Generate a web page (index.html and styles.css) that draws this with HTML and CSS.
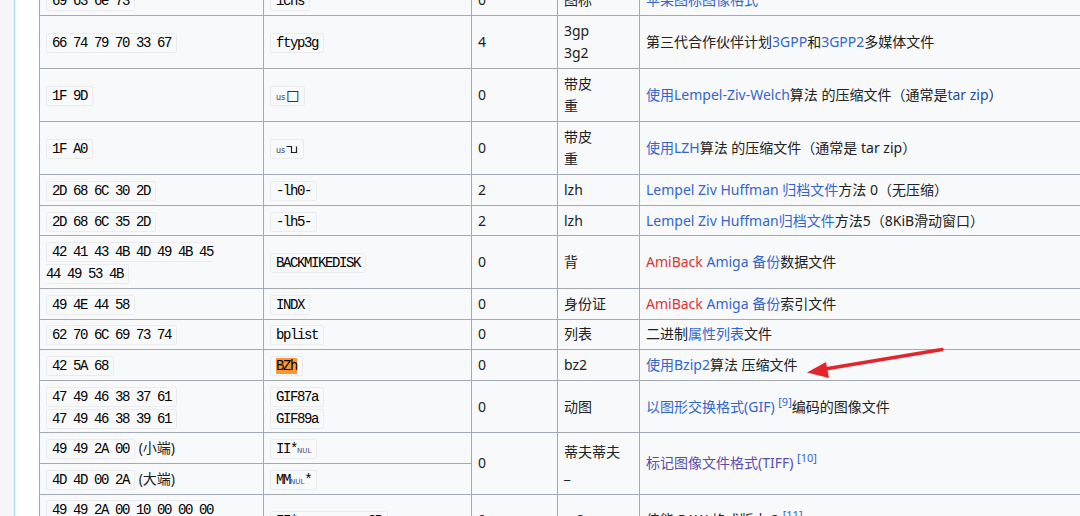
FILE: index.html
```html
<!DOCTYPE html>
<html lang="zh">
<head>
<meta charset="utf-8">
<title>文件签名列表</title>
<link rel="stylesheet" href="styles.css">
</head>
<body>
<div class="rail"></div>
<div class="content">
  <table class="wikitable">
    <colgroup>
      <col class="c1"><col class="c2"><col class="c3"><col class="c4"><col class="c5">
    </colgroup>
    <tbody>
      <tr>
        <td><code>69 63 6e 73</code></td>
        <td><code>icns</code></td>
        <td>0</td>
        <td>图标</td>
        <td><a class="link">苹果图标图像格式</a></td>
      </tr>
      <tr class="tall">
        <td><code>66 74 79 70 33 67</code></td>
        <td><code>ftyp3g</code></td>
        <td>4</td>
        <td>3gp<br>3g2</td>
        <td>第三代合作伙伴计划<a class="link">3GPP</a>和<a class="link">3GPP2</a>多媒体文件</td>
      </tr>
      <tr class="tall">
        <td><code>1F 9D</code></td>
        <td><code><span class="ctl">us</span><span class="tofu">□</span></code></td>
        <td>0</td>
        <td>带皮<br>重</td>
        <td><a class="link">使用Lempel-Ziv-Welch</a>算法 的压缩文件（通常是<a class="link dark">tar zip</a>）</td>
      </tr>
      <tr class="tall">
        <td><code>1F A0</code></td>
        <td><code><span class="ctl">us</span><svg class="nbsp" width="12" height="9" viewBox="0 0 12 9"><path d="M0.5 1.5H5.5V7.5H10.5V1.5" fill="none" stroke="#222" stroke-width="1.2"/></svg></code></td>
        <td>0</td>
        <td>带皮<br>重</td>
        <td><a class="link">使用LZH</a>算法 的压缩文件（通常是 tar zip）</td>
      </tr>
      <tr>
        <td><code>2D 68 6C 30 2D</code></td>
        <td><code>-lh0-</code></td>
        <td>2</td>
        <td>lzh</td>
        <td><a class="link">Lempel Ziv Huffman 归档文件</a>方法 0（无压缩）</td>
      </tr>
      <tr>
        <td><code>2D 68 6C 35 2D</code></td>
        <td><code>-lh5-</code></td>
        <td>2</td>
        <td>lzh</td>
        <td><a class="link">Lempel Ziv Huffman归档文件</a>方法5（8KiB滑动窗口）</td>
      </tr>
      <tr>
        <td><code>42 41 43 4B 4D 49 4B 45<br>44 49 53 4B</code></td>
        <td><code>BACKMIKEDISK</code></td>
        <td>0</td>
        <td>背</td>
        <td><a class="new">AmiBack</a> <a class="link">Amiga 备份</a>数据文件</td>
      </tr>
      <tr>
        <td><code>49 4E 44 58</code></td>
        <td><code>INDX</code></td>
        <td>0</td>
        <td>身份证</td>
        <td><a class="new">AmiBack</a> <a class="link">Amiga 备份</a>索引文件</td>
      </tr>
      <tr>
        <td><code>62 70 6C 69 73 74</code></td>
        <td><code>bplist</code></td>
        <td>0</td>
        <td>列表</td>
        <td>二进制<a class="link">属性列表</a>文件</td>
      </tr>
      <tr>
        <td><code>42 5A 68</code></td>
        <td><code><mark class="hl">BZh</mark></code></td>
        <td>0</td>
        <td>bz2</td>
        <td><a class="link">使用Bzip2</a>算法 压缩文件</td>
      </tr>
      <tr>
        <td><code>47 49 46 38 37 61</code><br><code>47 49 46 38 39 61</code></td>
        <td><code>GIF87a</code><br><code>GIF89a</code></td>
        <td>0</td>
        <td>动图</td>
        <td><a class="link">以图形交换格式(GIF)</a> <sup><a class="link">[9]</a></sup>编码的图像文件</td>
      </tr>
      <tr>
        <td><code>49 49 2A 00</code> (小端)</td>
        <td><code>II*<span class="ctl2">NUL</span></code></td>
        <td rowspan="2">0</td>
        <td rowspan="2" class="tiff">蒂夫蒂夫<br>_</td>
        <td rowspan="2"><a class="link visited">标记图像文件格式(TIFF)</a> <sup><a class="link">[10]</a></sup></td>
      </tr>
      <tr>
        <td><code>4D 4D 00 2A</code> (大端)</td>
        <td><code>MM<span class="ctl2">NUL</span>*</code></td>
      </tr>
      <tr>
        <td><code>49 49 2A 00 10 00 00 00<br>43 52</code></td>
        <td><code>II*<span class="ctl2">NUL</span><span class="ctl2">DLE</span><span class="ctl2">NUL</span><span class="ctl2">NUL</span><span class="ctl2">NUL</span>CR</code></td>
        <td>0</td>
        <td>cr2</td>
        <td>佳能 RAW 格式版本 2 <sup><a class="link">[11]</a></sup></td>
      </tr>
    </tbody>
  </table>
</div>
<svg class="arrow" width="1080" height="516" viewBox="0 0 1080 516">
  <line x1="942" y1="349.5" x2="822" y2="369.5" stroke="#e3242b" stroke-width="3.5" stroke-linecap="round"/>
  <polygon points="807,372.5 826,362 829,378" fill="#e3242b"/>
</svg>
</body>
</html>
```
FILE: styles.css
```css
html, body {
  margin: 0;
  padding: 0;
  height: 100%;
  overflow: hidden;
}
body {
  background: #f6f6f6;
  display: flex;
  font-family: "Noto Sans", "Noto Sans CJK SC", sans-serif;
  font-size: 14px;
  color: #202122;
  position: relative;
}
.rail {
  width: 14px;
  flex: none;
}
.content {
  flex: 1;
  background: #ffffff;
  border-left: 1px solid #a7d7f9;
  padding-left: 24px;
  overflow: hidden;
}
.wikitable {
  margin-top: -16px;
  border-collapse: collapse;
  table-layout: fixed;
  width: 1200px;
  background: #f8f9fa;
  color: #202122;
  line-height: 22px;
}
.c1 { width: 224px; }
.c2 { width: 208px; }
.c3 { width: 86px; }
.c4 { width: 82px; }
.c5 { width: 600px; }
.wikitable td {
  border: 1px solid #a2a9b1;
  padding: 3.8px 6px 3.8px 6px;
  vertical-align: middle;
  text-align: left;
}
.wikitable tr.tall td {
  padding-top: 4.1px;
  padding-bottom: 4.1px;
}
code {
  font-family: "Liberation Mono", "DejaVu Sans Mono", monospace;
  font-size: 14px;
  line-height: 14px;
  letter-spacing: -1.4px;
  color: #000;
  background: #f8f9fa;
  border: 1px solid #eaecf0;
  border-radius: 2px;
  padding: 1px 5px 1px 5px;
}
a {
  text-decoration: none;
}
.link { color: #3366cc; }
.link.dark { color: #2a4b9b; }
.link.visited { color: #5a4fa8; }
.new { color: #d33; }
sup {
  font-size: 11px;
  line-height: 1;
  vertical-align: 6px;
}
.ctl {
  font-family: "DejaVu Sans", sans-serif;
  font-size: 8px;
  letter-spacing: 0;
  color: #2b3b6b;
  margin-right: 1px;
}
.ctl2 {
  font-family: "DejaVu Sans", sans-serif;
  font-size: 7px;
  letter-spacing: 0;
  color: #3a4a8a;
}
.tofu {
  font-family: "DejaVu Sans", sans-serif;
  font-size: 14px;
  letter-spacing: 0;
}
.nbsp {
  vertical-align: -1px;
}
.hl {
  background: #fb9634;
  color: #000;
  padding: 0;
}
.arrow {
  position: absolute;
  left: 0;
  top: 0;
  pointer-events: none;
}
```
